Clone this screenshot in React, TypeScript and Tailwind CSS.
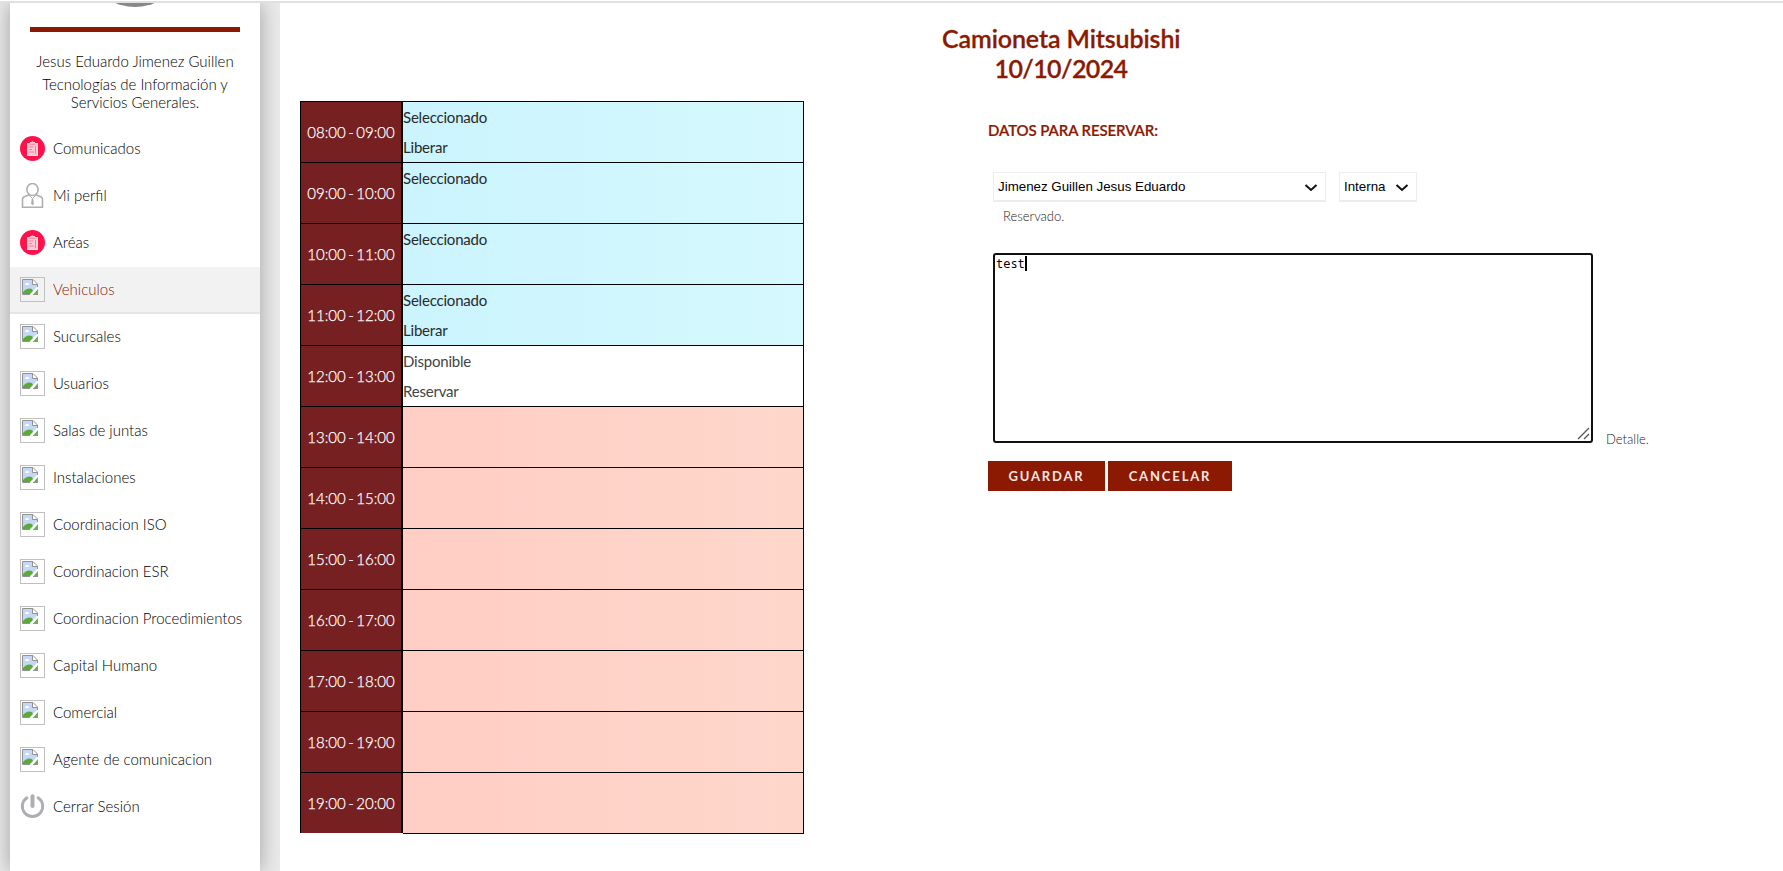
import type { ReactNode } from "react";

function BrokenImage() {
  return (
    <span className="flex h-[25px] w-[25px] border border-[#c0c0c0] pl-px pt-px">
      <svg width="16" height="16" viewBox="0 0 16 16">
        <path d="M0 0H11L16 5V9L9 16H0Z" fill="#fff" />
        <path d="M1 1H11V6H15V8L8 15H1Z" fill="#c4d7f5" />
        <path d="M3 6Q3 4 5 4Q7 3 7 6Z" fill="#fff" />
        <path d="M1 15V13Q5 8 10 10L11 12L8 15Z" fill="#5aab35" />
        <path d="M8.5 15L16 7.5V10L11 15Z" fill="#fff" />
        <path d="M16 10V16H11L13 13.5Z" fill="#6aaa50" />
        <path d="M.5 15.5V.5H11L15.5 5V8M10.500 .5V5.500H15.5M.5 15.500H8M11 15.5H15.5V11" fill="none" stroke="#929292" />
      </svg>
    </span>
  );
}

function Clipboard() {
  return (
    <svg width="25" height="25" viewBox="0 0 25 25">
      <circle cx="12.500" cy="12.500" r="12.500" fill="#ff1249" />
      <path d="M7 7H10V6H11.500Q12.500 4.300 13.500 6H15V7H18V20H7Z" fill="#ffc9d4" />
      <path d="M9.500 8.200H15.500M9 11H13M9 13.500H12M9 16H14M15.500 10V18" stroke="#ff6385" strokeWidth=".8" fill="none" />
      <path d="M7.500 7.500V19.500H17.500V7.500" stroke="#ffe4ea" strokeWidth=".8" fill="none" />
    </svg>
  );
}

function Person() {
  return (
    <svg width="25" height="25" viewBox="0 0 25 25" fill="none" stroke="#aeafb1" strokeWidth="1.600">
      <ellipse cx="12.500" cy="6.500" rx="5.600" ry="6" />
      <path d="M9 11.800L3.800 14Q2.500 14.700 2.500 16.500V24.300H22.500V16.500Q22.500 14.700 21.200 14L16 11.800" />
      <path d="M9 12L12.500 15.500L16 12" strokeWidth="1" />
      <path d="M11.800 15.500H13.200L13.900 20.500L12.500 22.500L11.100 20.500Z" fill="#aeafb1" stroke="none" />
    </svg>
  );
}

function Power() {
  return (
    <svg width="25" height="25" viewBox="0 0 25 25" fill="none" stroke="#adaeb2" strokeLinecap="round">
      <path d="M7 3.700A10.200 10.200 0 1 0 18 3.700" strokeWidth="2.900" />
      <path d="M12.500 2.200V12" strokeWidth="4" />
    </svg>
  );
}

const items: [string, ReactNode][] = [
  ["Comunicados", <Clipboard />],
  ["Mi perfil", <Person />],
  ["Aréas", <Clipboard />],
  ["Vehiculos", <BrokenImage />],
  ["Sucursales", <BrokenImage />],
  ["Usuarios", <BrokenImage />],
  ["Salas de juntas", <BrokenImage />],
  ["Instalaciones", <BrokenImage />],
  ["Coordinacion ISO", <BrokenImage />],
  ["Coordinacion ESR", <BrokenImage />],
  ["Coordinacion Procedimientos", <BrokenImage />],
  ["Capital Humano", <BrokenImage />],
  ["Comercial", <BrokenImage />],
  ["Agente de comunicacion", <BrokenImage />],
  ["Cerrar Sesión", <Power />],
];

type Slot = { time: string; state: "selected" | "free" | "busy"; lines: string[] };

const slots: Slot[] = [
  { time: "08:00 - 09:00", state: "selected", lines: ["Seleccionado", "Liberar"] },
  { time: "09:00 - 10:00", state: "selected", lines: ["Seleccionado"] },
  { time: "10:00 - 11:00", state: "selected", lines: ["Seleccionado"] },
  { time: "11:00 - 12:00", state: "selected", lines: ["Seleccionado", "Liberar"] },
  { time: "12:00 - 13:00", state: "free", lines: ["Disponible", "Reservar"] },
  { time: "13:00 - 14:00", state: "busy", lines: [] },
  { time: "14:00 - 15:00", state: "busy", lines: [] },
  { time: "15:00 - 16:00", state: "busy", lines: [] },
  { time: "16:00 - 17:00", state: "busy", lines: [] },
  { time: "17:00 - 18:00", state: "busy", lines: [] },
  { time: "18:00 - 19:00", state: "busy", lines: [] },
  { time: "19:00 - 20:00", state: "busy", lines: [] },
];

const slotStyle = {
  selected: "bg-linear-to-r from-[#cbf4ff] to-[#d5f9fd] text-[#2a2a2a]",
  free: "bg-white text-[#444]",
  busy: "bg-linear-to-r from-[#ffcdc4] to-[#fed7cb]",
};

function Sidebar() {
  return (
    <aside className="flex w-[280px] shrink-0 overflow-hidden bg-[#eaeaea] pl-[10px]">
      <div className="w-[250px] bg-white shadow-[0_0_20px_rgba(0,0,0,0.32)]">
        <div className="flex h-[24px] justify-center overflow-hidden">
          <svg width="50" height="8" viewBox="0 0 50 8">
            <ellipse cx="25" cy="-21" rx="36" ry="25" fill="#888" />
          </svg>
        </div>
        <div className="mx-5 h-[5px] bg-[#8c1902]" />
        <div className="h-[94px] pt-[17px] text-center text-[15px] font-light text-black">
          <p className="leading-[24px]">Jesus Eduardo Jimenez Guillen</p>
          <p className="mt-[2px] leading-[18px] tracking-[-0.05px]">
            Tecnologías de Información y<br />Servicios Generales.
          </p>
        </div>
        <nav>
          {items.map(([label, icon]) => (
            <a
              key={label}
              className={
                label === "Vehiculos"
                  ? "flex h-[47px] items-center border-b-2 border-[#e6e6e6] bg-[#f2f2f2] pl-[10px] text-[15px] font-light text-[#8c1902]"
                  : "flex h-[47px] items-center border-b-2 border-transparent pl-[10px] text-[15px] font-light text-black"
              }
            >
              {icon}
              <span className="ml-2">{label}</span>
            </a>
          ))}
        </nav>
      </div>
    </aside>
  );
}

function Schedule() {
  return (
    <div className="mt-[98px] w-[504px] shrink-0">
      {slots.map((s, i) => (
        <div key={s.time} className="flex h-[61px]">
          <div className="h-full w-[103px] border-t border-l border-r-2 border-black bg-[#762022]">
            <div className="flex h-full items-center justify-center text-[15px] font-light text-white [word-spacing:-1.5px] [-webkit-text-stroke:0.25px_white]">
              {s.time}
            </div>
          </div>
          <div
            className={`w-[401px] border-t border-r border-black text-[15px] tracking-[-0.2px] ${
              i === slots.length - 1 ? "h-[62px] border-b" : "h-full"
            } ${slotStyle[s.state]}`}
          >
            {s.lines.map((l) => (
              <p key={l} className="h-[30px] leading-[31px]">{l}</p>
            ))}
          </div>
        </div>
      ))}
    </div>
  );
}

function Select({ value, width }: { value: string; width: string }) {
  return (
    <div className={`flex h-[30px] items-center justify-between border border-b-2 border-[#ededed] bg-white pl-1 pr-[7px] font-['Liberation_Sans',sans-serif] text-[13.333px] text-black ${width}`}>
      <span>{value}</span>
      <svg width="14" height="8" viewBox="0 0 14 8" className="mt-[3px]">
        <path d="M1.500 1L7 6L12.500 1" fill="none" stroke="#111" strokeWidth="2" />
      </svg>
    </div>
  );
}

function ReservationForm() {
  return (
    <section className="ml-[138px] w-[780px] shrink-0">
      <h1 className="h-[90px] w-[238px] pt-[20px] text-center text-[25px] leading-[30px] font-semibold whitespace-nowrap text-[#8c1902] [-webkit-text-stroke:0.3px_#8c1902]">
        <span className="tracking-[-0.1px]">Camioneta Mitsubishi</span>
        <br />
        <span className="tracking-[-0.6px]">10/10/2024</span>
      </h1>
      <div className="pl-[46px]">
        <h2 className="mt-[27px] h-[49px] text-[15px] leading-[20px] font-semibold tracking-[-0.1px] text-[#8c1902] [-webkit-text-stroke:0.2px_#8c1902]">
          DATOS PARA RESERVAR:
        </h2>
        <div className="ml-[5px]">
          <div className="mt-[3px] flex gap-[13px]">
            <Select value="Jimenez Guillen Jesus Eduardo" width="w-[333px]" />
            <Select value="Interna" width="w-[78px]" />
          </div>
          <p className="mt-[4px] ml-[10px] h-[47px] text-[13px] leading-[20px] font-light text-[#222]">Reservado.</p>
          <div className="flex items-end">
            <div className="relative h-[190px] w-[600px] shrink-0 rounded-[3px] border-2 border-[#101010] bg-white pt-px pl-px">
              <div className="flex font-['Noto_Sans_Mono','DejaVu_Sans_Mono',monospace] text-[12px] leading-[15px] text-black">
                <span className="w-[29px]">test</span>
                <span className="h-[15px] w-[2px] bg-black" />
              </div>
              <svg className="absolute right-px bottom-px" width="13" height="13" viewBox="0 0 13 13">
                <path d="M1 12L12 1M7 12L12 7" stroke="#555" strokeWidth="1.300" />
              </svg>
            </div>
            <span className="mb-[-6px] ml-[13px] text-[13px] leading-[20px] font-light text-[#222]">Detalle.</span>
          </div>
        </div>
        <div className="mt-[18px] flex gap-[3px] text-[13px] font-bold tracking-[1.850px] text-[#f4e6e3]">
          <button className="h-[30px] w-[117px] bg-[#8c1902] pt-px">GUARDAR</button>
          <button className="h-[30px] w-[124px] bg-[#8c1902] pt-px">CANCELAR</button>
        </div>
      </div>
    </section>
  );
}

export default function App() {
  return (
    <div className="flex h-[871px] flex-col overflow-hidden bg-white pt-px font-['Lato','Liberation_Sans',sans-serif]">
      <div className="h-[2px] shrink-0 bg-[#e0e0e0]" />
      <div className="flex min-h-0 flex-1">
        <Sidebar />
        <main className="flex flex-1 overflow-hidden pl-5">
          <Schedule />
          <ReservationForm />
        </main>
      </div>
    </div>
  );
}
